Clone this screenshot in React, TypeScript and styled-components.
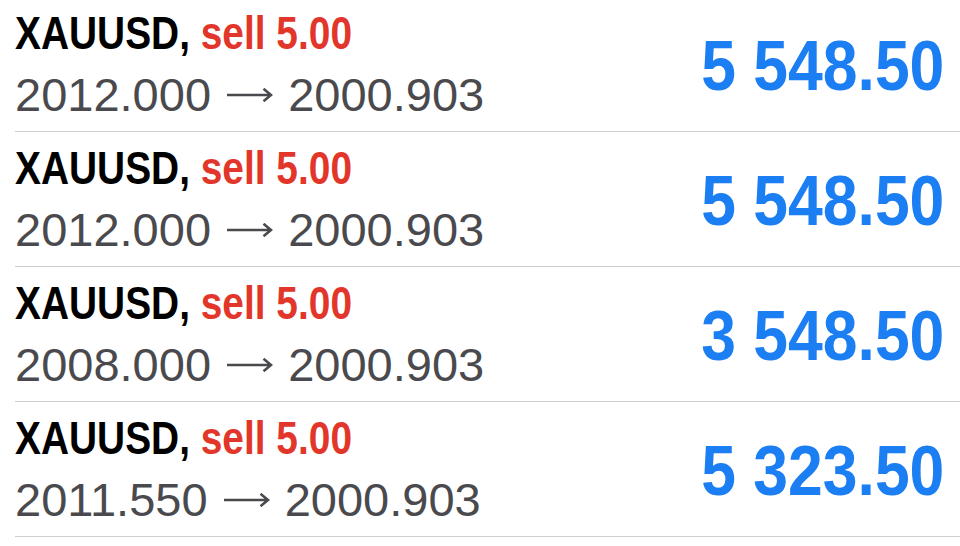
import styled, { createGlobalStyle } from "styled-components";

// ── Globals ───────────────────────────────────────────────

const GlobalStyle = createGlobalStyle`
  html, body {
    margin: 0;
    padding: 0;
    background: #ffffff;
  }
  body {
    font-family: "Liberation Sans", Arial, sans-serif;
    -webkit-font-smoothing: antialiased;
  }
`;

// ── Layout ────────────────────────────────────────────────

const List = styled.div`
  width: 960px;
  height: 546px;
  overflow: hidden;
  display: flex;
  flex-direction: column;
`;

const Inner = styled.div`
  display: flex;
  flex-direction: column;
  margin-top: -3px;
`;

const Row = styled.div`
  height: 134px;
  margin-left: 15px;
  padding-right: 16px;
  border-bottom: 1px solid #cfcfd2;
  display: flex;
  justify-content: space-between;
  align-items: flex-start;
`;

const Info = styled.div`
  display: flex;
  flex-direction: column;
  padding-top: 8px;
`;

// ── Text ──────────────────────────────────────────────────

const Title = styled.div`
  font-size: 46px;
  line-height: 56px;
  font-weight: 700;
  color: #000;
  white-space: nowrap;
  transform: scaleX(0.845);
  transform-origin: left center;
`;

const Side = styled.span`
  color: #e2362a;
`;

const Prices = styled.div`
  font-size: 47px;
  line-height: 67px;
  color: #4a4a4e;
  white-space: nowrap;
`;

const Arrow = styled.svg`
  display: inline-block;
  width: 46px;
  height: 14px;
  margin: 0 2px 0 3px;
  vertical-align: 9px;
`;

const Amount = styled.div`
  padding-top: 33px;
  font-size: 71px;
  line-height: 71px;
  font-weight: 700;
  color: #1b7ef2;
  white-space: nowrap;
  transform: scaleX(0.88);
  transform-origin: right center;
`;

// ── Data ──────────────────────────────────────────────────

type Deal = { open: string; close: string; profit: string };

const deals: Deal[] = [
  { open: "2012.000", close: "2000.903", profit: "5 548.50" },
  { open: "2012.000", close: "2000.903", profit: "5 548.50" },
  { open: "2008.000", close: "2000.903", profit: "3 548.50" },
  { open: "2011.550", close: "2000.903", profit: "5 323.50" },
];

function RightArrow() {
  return (
    <Arrow viewBox="0 0 46 14" aria-label="→">
      <path
        d="M0 7 H44 M36.5 0.8 L44 7 L36.5 13.2"
        fill="none"
        stroke="#4a4a4e"
        strokeWidth="2.6"
        strokeLinejoin="miter"
      />
    </Arrow>
  );
}

export default function App() {
  return (
    <>
      <GlobalStyle />
      <List>
        <Inner>
          {deals.map((d, i) => (
            <Row key={i}>
              <Info>
                <Title>
                  XAUUSD, <Side>sell 5.00</Side>
                </Title>
                <Prices>
                  {d.open} <RightArrow /> {d.close}
                </Prices>
              </Info>
              <Amount>{d.profit}</Amount>
            </Row>
          ))}
        </Inner>
      </List>
    </>
  );
}
